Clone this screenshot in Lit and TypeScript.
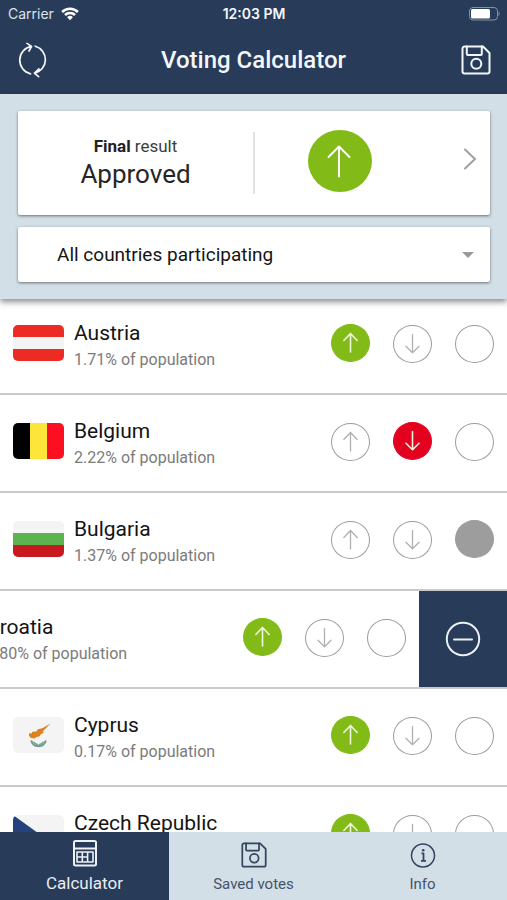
import { LitElement, html, css, svg, nothing } from "lit";
import { customElement, property } from "lit/decorators.js";
import { classMap } from "lit/directives/class-map.js";

type Vote = "yes" | "no" | "abstain" | "none";

interface Country {
  id: string;
  name: string;
  share: string;
  vote: Vote;
  open?: boolean;
}

const COUNTRIES: Country[] = [
  { id: "at", name: "Austria", share: "1.71", vote: "yes" },
  { id: "be", name: "Belgium", share: "2.22", vote: "no" },
  { id: "bg", name: "Bulgaria", share: "1.37", vote: "abstain" },
  { id: "hr", name: "Croatia", share: "0.80", vote: "yes", open: true },
  { id: "cy", name: "Cyprus", share: "0.17", vote: "yes" },
  { id: "cz", name: "Czech Republic", share: "2.04", vote: "yes" },
];

const FLAGS: Record<string, unknown> = {
  at: svg`<rect width="51" height="36" fill="#f4f4f4"/><rect width="51" height="12" fill="#ec2b24"/><rect y="24" width="51" height="12" fill="#ec2b24"/>`,
  be: svg`<rect width="17" height="36" fill="#000"/><rect x="17" width="17" height="36" fill="#fee53a"/><rect x="34" width="17" height="36" fill="#fb0f20"/>`,
  bg: svg`<rect width="51" height="12" fill="#f4f4f4"/><rect y="12" width="51" height="12" fill="#5bb450"/><rect y="24" width="51" height="12" fill="#c8191f"/>`,
  hr: svg`<rect width="51" height="12" fill="#ec2b24"/><rect y="12" width="51" height="12" fill="#f4f4f4"/><rect y="24" width="51" height="12" fill="#26427c"/>`,
  cy: svg`<rect width="51" height="36" fill="#f4f4f4"/>
    <path fill="#dc8320" d="M37.5 6.5 30 14.2l.6 1.6-3 1.8-.8 1.7-3.2.6-2.2 1.7-3.6-.6-1.9-2.4.4-2.6 2.4.4.6-1.7 4-.3 1.6-2.2 4.4-1z"/>
    <path fill="none" stroke="#6f9f8c" stroke-width="2.2" stroke-dasharray="2.4 .8" d="M18.500 24.500c1.500 3 3.500 4.600 6.500 4.600M32.500 24.500c-1.500 3-3.500 4.600-6.500 4.600"/>
    <path fill="none" stroke="#6f9f8c" stroke-width="1.4" stroke-dasharray="1.8 .9" d="M21 25c.8 1.500 2 2.200 3.500 2.500M30 25c-.8 1.500-2 2.200-3.500 2.500"/>`,
  cz: svg`<rect width="51" height="18" fill="#f4f4f4"/><rect y="18" width="51" height="18" fill="#ec2b24"/><path d="M0 0 25 18 0 36z" fill="#26427c"/>`,
};

const upArrow = html`<svg class="arrow" viewBox="0 0 39 38" aria-hidden="true"><path d="M19.500 28V9.500M12.800 16.500l6.700-7 6.700 7"/></svg>`;
const downArrow = html`<svg class="arrow" viewBox="0 0 39 38" aria-hidden="true"><path d="M19.500 9.500v18.300M13 21.300l6.500 6.500 6.500-6.500"/></svg>`;
const floppy = html`<svg class="floppy" viewBox="0 0 30 30" aria-hidden="true">
  <path d="M3.500 1.500H22l6.500 6.500v18.500a2 2 0 0 1-2 2h-23a2 2 0 0 1-2-2v-23a2 2 0 0 1 2-2z"/>
  <path d="M5.800 1.500v7.500a1 1 0 0 0 1 1h13a1 1 0 0 0 1-1V1.500"/>
  <circle cx="15.300" cy="18.800" r="5"/>
</svg>`;

const base = css`
  *, *::before, *::after { box-sizing: border-box; }
  button {
    border: 0;
    padding: 0;
    background: none;
    font: inherit;
    color: inherit;
    cursor: pointer;
  }
  svg { display: block; fill: none; stroke-linecap: round; stroke-linejoin: round; }
`;

@customElement("country-row")
export class CountryRow extends LitElement {
  @property({ attribute: false }) country!: Country;

  static styles = [
    base,
    css`
      :host {
        display: flex;
        height: 98px;
        border-bottom: 2px solid #c9c9c9;
        overflow: hidden;
      }
      .content {
        flex: 0 0 100%;
        display: flex;
        align-items: flex-start;
        gap: 10px;
        padding: 0 13px;
      }
      .open { margin-left: -88px; }
      .flag { width: 51px; height: 36px; margin-top: 28px; border-radius: 5px; overflow: hidden; }
      .text { flex: 1; min-width: 0; padding-top: 23px; white-space: nowrap; }
      .name { margin: 0; font-size: 21px; line-height: 27px; font-weight: 400; color: #141414; }
      .share { margin: 0; font-size: 16px; line-height: 26px; color: #7b7b7b; }
      .votes { display: flex; gap: 23px; margin: 0; border: 0; padding: 27px 0 0; }
      .vote { display: grid; height: 38px; cursor: pointer; }
      .vote > * { grid-area: 1 / 1; width: 39px; height: 38px; }
      .vote:not(:has(:checked)) { margin-top: 1px; }
      input {
        appearance: none;
        margin: 0;
        border: 1px solid #9c9c9c;
        border-radius: 50%;
      }
      .arrow { stroke: #b0b0b0; stroke-width: 1.300; z-index: 1; pointer-events: none; }
      input:checked { border-color: currentColor; background: currentColor; }
      input:checked + .arrow { stroke: #eef6dc; stroke-width: 1.600; }
      .yes { color: #82bb18; }
      .no { color: #e4001f; }
      .abstain { color: #9d9d9d; }
      .remove {
        flex: 0 0 88px;
        display: grid;
        place-items: center;
        background: #283c59;
      }
      .minus { width: 36px; height: 36px; stroke: #edf1f6; stroke-width: 2; }
    `,
  ];

  private option(value: Vote, label: string, icon: unknown) {
    const c = this.country;
    return html`<label class="vote">
      <input class=${value} type="radio" name="vote" value=${value}
        aria-label="${c.name}: ${label}" ?checked=${c.vote === value} />${icon}
    </label>`;
  }

  render() {
    const c = this.country;
    return html`
      <div class=${classMap({ content: true, open: !!c.open })}>
        <svg class="flag" viewBox="0 0 51 36" aria-hidden="true">${FLAGS[c.id]}</svg>
        <div class="text">
          <h2 class="name">${c.name}</h2>
          <p class="share">${c.share}% of population</p>
        </div>
        <fieldset class="votes" aria-label=${c.name}>
          ${this.option("yes", "in favour", upArrow)}
          ${this.option("no", "against", downArrow)}
          ${this.option("abstain", "abstain", nothing)}
        </fieldset>
      </div>
      ${c.open
        ? html`<button class="remove" aria-label="Exclude ${c.name}">
            <svg class="minus" viewBox="0 0 36 36"><circle cx="18" cy="18" r="16.200"/><path d="M9 18.500h18"/></svg>
          </button>`
        : nothing}
    `;
  }
}

@customElement("app-root")
export class AppRoot extends LitElement {
  static styles = [
    base,
    css`
      :host {
        display: flex;
        flex-direction: column;
        height: 100vh;
        background: #fff;
        font-family: Roboto, "Liberation Sans", sans-serif;
        color: #222;
      }
      .header { flex: none; background: #283c59; color: #f3f6fa; }
      .status {
        display: grid;
        grid-template-columns: 1fr auto 1fr;
        align-items: center;
        height: 28px;
        padding: 0 7px 0 8px;
        font-family: Inter, "Liberation Sans", sans-serif;
        font-size: 14px;
        line-height: 28px;
      }
      .carrier { display: flex; align-items: center; gap: 7px; color: #dde2ea; }
      .wifi { width: 18px; height: 14px; fill: #fff; }
      .time { font-weight: 600; }
      .battery { width: 32px; height: 16px; justify-self: end; }
      .bar {
        display: grid;
        grid-template-columns: 34px 1fr 34px;
        align-items: center;
        height: 66px;
        padding: 0 16px 2px;
      }
      .title { margin: 0; text-align: center; font-size: 24px; line-height: 32px; font-weight: 500; }
      .refresh { width: 34px; height: 36px; stroke: currentColor; stroke-width: 1.700; }
      .floppy { width: 30px; height: 30px; stroke: currentColor; stroke-width: 2; }
      .save { justify-self: end; }
      .panel {
        position: relative;
        z-index: 1;
        flex: none;
        display: flex;
        flex-direction: column;
        gap: 12px;
        padding: 17px 17px 17px 18px;
        background: #d2dfe6;
        box-shadow: 0 3px 6px rgba(0, 0, 0, 0.45);
      }
      .card { background: #fff; border-radius: 2px; box-shadow: 0 1px 3px rgba(0, 0, 0, 0.5); }
      .result { display: flex; align-items: center; height: 104px; }
      .verdict {
        flex: 1;
        display: flex;
        flex-direction: column;
        justify-content: center;
        height: 62px;
        border-right: 2px solid #e2e2e2;
      }
      .caption { font-size: 17px; line-height: 22px; color: #3c3c3c; }
      .caption b { font-weight: 700; color: #222; }
      .outcome { font-size: 26px; line-height: 34px; color: #262626; }
      .decision { flex: 1; display: flex; align-items: center; height: 62px; padding-bottom: 4px; }
      .mark { flex: 1; display: grid; place-items: center; }
      .big { width: 64px; height: 62px; }
      .more { display: flex; justify-content: flex-end; width: 66px; padding: 0 13px 4px 0; }
      .chevron { width: 14px; height: 22px; stroke: #a0a0a0; stroke-width: 2; }
      .filter { display: grid; align-items: center; height: 55px; }
      .filter > * { grid-area: 1 / 1; }
      .select {
        appearance: none;
        width: 100%;
        height: 55px;
        border: 0;
        padding: 0 44px 0 39px;
        background: none;
        font: inherit;
        font-size: 19px;
        color: #141414;
      }
      .caret { justify-self: end; width: 12px; height: 6px; margin-right: 16px; fill: #999; pointer-events: none; }
      .list { flex: 1; min-height: 0; margin-top: -2px; overflow-y: auto; scrollbar-width: none; }
      .tabs { flex: none; display: flex; height: 68px; background: #d2dfe6; }
      .tab {
        flex: 1;
        display: flex;
        flex-direction: column;
        align-items: center;
        gap: 3px;
        padding-top: 9px;
        font-size: 15px;
        line-height: 24px;
        color: #44536b;
        text-decoration: none;
      }
      .active { gap: 4px; padding-top: 7px; background: #283c59; color: #e8edf3; font-size: 17px; }
      .tab svg { width: 28px; height: 28px; padding: 1px; stroke: #33445f; stroke-width: 2; }
      .tab.active svg { padding: 0; stroke: #eef2f7; }
    `,
  ];

  render() {
    return html`
      <header class="header">
        <div class="status">
          <span class="carrier">Carrier
            <svg class="wifi" viewBox="0 0 18 14" aria-hidden="true">
              <path d="M9 13.200 6.100 10.200a4.200 4.200 0 0 1 5.800 0z"/>
              <path d="M4.900 9 3.100 7.100a8.500 8.500 0 0 1 11.800 0L13.100 9a5.900 5.900 0 0 0-8.200 0z"/>
              <path d="M2 5.900.2 4.100a12.700 12.700 0 0 1 17.600 0L16 5.900a10.100 10.100 0 0 0-14 0z"/>
            </svg>
          </span>
          <span class="time">12:03 PM</span>
          <svg class="battery" viewBox="0 0 32 16" aria-hidden="true">
            <rect x="1.500" y="1.500" width="28" height="12.500" rx="3.500" stroke="#8290a5"/>
            <rect x="3" y="3" width="19" height="9.500" rx="1.500" fill="#fff"/>
            <path d="M30.500 5.500v4.500c1.500-.8 1.500-3.700 0-4.500z" fill="#8290a5"/>
          </svg>
        </div>
        <div class="bar">
          <button aria-label="Reset votes">
            <svg class="refresh" viewBox="0 0 34 36">
              <path d="M14.500 31.800A14 14 0 0 1 15.300 4.400M11 1.400l4.600 3-2.600 4.600"/>
              <path d="M19.300 4.200a14 14 0 0 1-.800 27.100M23 27l-4.600 4.200 4.200 3.400"/>
            </svg>
          </button>
          <h1 class="title">Voting Calculator</h1>
          <button class="save" aria-label="Save vote">${floppy}</button>
        </div>
      </header>

      <section class="panel">
        <button class="card result">
          <span class="verdict">
            <span class="caption"><b>Final</b> result</span>
            <span class="outcome">Approved</span>
          </span>
          <span class="decision">
            <span class="mark">
              <svg class="big" viewBox="0 0 64 62" aria-hidden="true">
                <ellipse cx="32" cy="31" rx="32" ry="31" fill="#82bb18"/>
                <path d="M31 46.500v-30M20.500 27 31 16.500 41.500 27" stroke="#fff" stroke-width="2"/>
              </svg>
            </span>
            <span class="more">
              <svg class="chevron" viewBox="0 0 14 22" aria-hidden="true"><path stroke-linejoin="miter" d="M2 1.500 12 11 2 20.500"/></svg>
            </span>
          </span>
        </button>
        <div class="card filter">
          <select class="select" aria-label="Participating countries">
            <option>All countries participating</option>
          </select>
          <svg class="caret" viewBox="0 0 12 6" aria-hidden="true"><path d="M0 0h12L6 6z"/></svg>
        </div>
      </section>

      <main class="list">
        ${COUNTRIES.map((c) => html`<country-row .country=${c}></country-row>`)}
      </main>

      <nav class="tabs">
        <a class="tab active" href="#calculator" aria-current="page">
          <svg viewBox="0 0 28 28" aria-hidden="true">
            <rect x="3" y="2" width="22" height="24.500" rx="1.500"/>
            <path d="M3 9.500h22"/>
            <path stroke-width="1.600" d="M6 13h16v10H6zM11.300 13v10M16.600 13v10M6 18h10.600"/>
          </svg>
          Calculator
        </a>
        <a class="tab" href="#saved">${floppy}Saved votes</a>
        <a class="tab" href="#info">
          <svg viewBox="0 0 26 26" aria-hidden="true">
            <circle cx="13" cy="13.500" r="11.500" stroke-width="1.500"/>
            <path stroke-linecap="butt" d="M11.500 11.300h2v7M11 18.800h5" stroke-width="1.800"/>
            <circle cx="13.200" cy="8.300" r="1.300" fill="#33445f" stroke="none"/>
          </svg>
          Info
        </a>
      </nav>
    `;
  }
}
